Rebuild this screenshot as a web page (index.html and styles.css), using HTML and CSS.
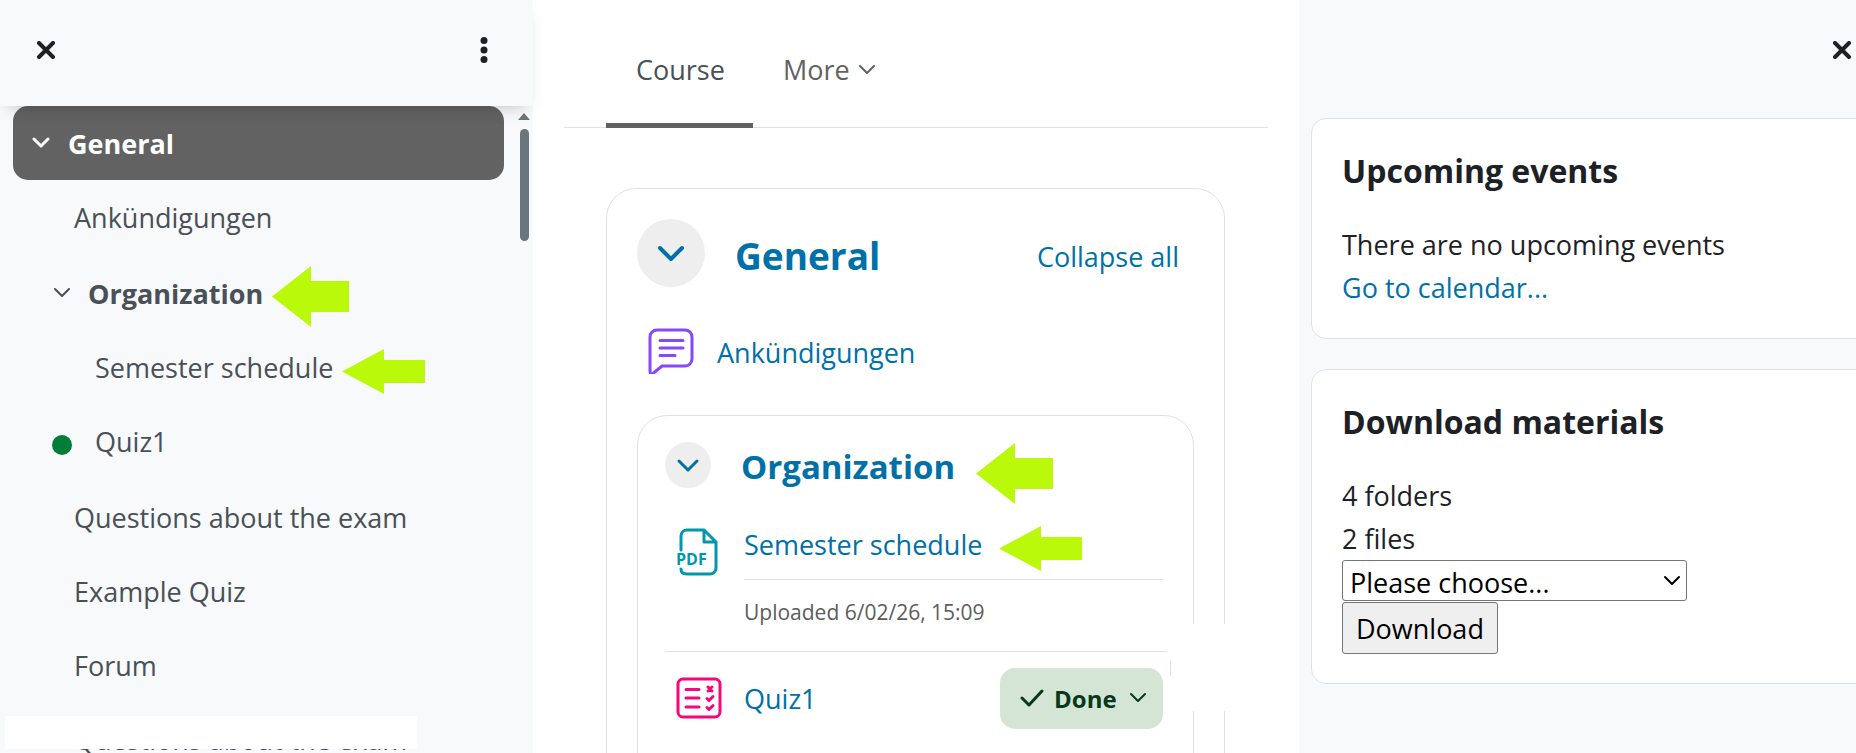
FILE: index.html
```html
<!DOCTYPE html>
<html lang="en">
<head>
  <meta charset="UTF-8" />
  <meta name="viewport" content="width=device-width, initial-scale=1.0"/>
  <title>Course</title>
  <link rel="stylesheet" href="styles.css">
</head>
<body>

  <div class="page">
    <!-- Course index -->
    <aside class="index">
      <div class="index-header">
        <button type="button" class="icon-btn" aria-label="Close course index">
          <svg width="18" height="18" viewBox="0 0 18 18"><path d="M2 2l14 14M16 2L2 16"/></svg>
        </button>
        <button type="button" class="icon-btn dots" aria-label="Options">
          <svg width="8" height="26" viewBox="0 0 8 26"><circle cx="4" cy="3.500" r="3.500"/><circle cx="4" cy="13" r="3.500"/><circle cx="4" cy="22.500" r="3.500"/></svg>
        </button>
      </div>
      <nav class="index-body">
        <ul class="index-list">
          <li><a href="#general" class="row section">
            <svg class="chevron" width="18" height="12" viewBox="0 0 18 12"><path d="M2 2l7 7 7-7"/></svg>General</a></li>
          <li><a href="#" class="row">Ankündigungen</a></li>
          <li class="subsection">
            <a href="#organization" class="row sub-title">
              <svg class="chevron" width="18" height="12" viewBox="0 0 18 12"><path d="M2 2l7 7 7-7"/></svg>Organization
              <svg class="arrow arrow-index-org" width="77" height="61" viewBox="0 0 77 61"><path d="M0 30.500L39 0v15h38v31H39v15z"/></svg>
            </a>
            <a href="#" class="row nested">Semester schedule
              <svg class="arrow arrow-index-file" width="83" height="45" viewBox="0 0 83 45"><path d="M0 22.500L42 0v11h41v23H42v11z"/></svg>
            </a>
            <a href="#" class="row nested"><span class="status"></span>Quiz1</a>
          </li>
          <li><a href="#" class="row">Questions about the exam</a></li>
          <li><a href="#" class="row">Example Quiz</a></li>
          <li><a href="#" class="row">Forum</a></li>
          <li class="masked"><a href="#" class="row">Questions about the exam</a></li>
        </ul>
        <div class="scrollbar">
          <svg width="12" height="7" viewBox="0 0 12 7"><path d="M6 0l6 7H0z"/></svg>
          <div class="thumb"></div>
          <svg class="down" width="12" height="7" viewBox="0 0 12 7"><path d="M6 7L0 0h12z"/></svg>
        </div>
      </nav>
    </aside>

    <!-- Course content -->
    <main class="content">
      <nav class="tabs">
        <a href="#" class="tab active">Course</a>
        <a href="#" class="tab">More
          <svg class="chevron" width="18" height="12" viewBox="0 0 18 12"><path d="M2 2l7 7 7-7"/></svg>
        </a>
      </nav>

      <section class="card" id="general">
        <div class="card-header">
          <button type="button" class="toggle" aria-label="Collapse General">
            <svg width="28" height="18" viewBox="0 0 28 18"><path d="M3 4l11 11L25 4"/></svg>
          </button>
          <h2>General</h2>
          <a href="#" class="collapse">Collapse all</a>
        </div>

        <div class="activity forum">
          <svg class="forum-icon" width="46" height="46" viewBox="0 0 46 46"><path d="M2 43V9a7 7 0 0 1 7-7h28a7 7 0 0 1 7 7v22a7 7 0 0 1-7 7H14l-9 7.500q-3 1-3-2.500zM12 12.500h23M12 20h23M12 27.500h15"/></svg>
          <a href="#">Ankündigungen</a>
        </div>

        <section class="card inner" id="organization">
          <div class="inner-header">
            <button type="button" class="toggle small" aria-label="Collapse Organization">
              <svg width="24" height="16" viewBox="0 0 24 16"><path d="M3 4l9 9 9-9"/></svg>
            </button>
            <h3>Organization</h3>
            <svg class="arrow arrow-org" width="77" height="61" viewBox="0 0 77 61"><path d="M0 30.500L39 0v15h38v31H39v15z"/></svg>
          </div>

          <div class="activity file">
            <svg class="pdf-icon" width="42" height="48" viewBox="0 0 42 48">
              <path d="M4 22V8a6 6 0 0 1 6-6h17l12 12v26a6 6 0 0 1-6 6H10q-6 0-6-5M27 2v12h12"/>
              <text x="-1" y="37">PDF</text>
            </svg>
            <div class="file-body">
              <a href="#">Semester schedule</a>
              <p>Uploaded 6/02/26, 15:09</p>
            </div>
            <svg class="arrow arrow-file" width="83" height="45" viewBox="0 0 83 45"><path d="M0 22.500L42 0v11h41v23H42v11z"/></svg>
          </div>

          <div class="activity quiz">
            <svg class="quiz-icon" width="46" height="42" viewBox="0 0 46 42"><rect x="2" y="2" width="42" height="38" rx="5"/><path class="marks" d="M10 12.500h13M10 21h13M10 30h13M32 10l4 4M36 10l-4 4M31 21.500l2 2 4-4M31 30.500l2 2 4-4"/></svg>
            <a href="#">Quiz1</a>
            <button type="button" class="done">
              <svg class="check" width="24" height="18" viewBox="0 0 24 18"><path d="M2 9l7 7L22 2"/></svg>
              Done
              <svg class="chevron" width="18" height="12" viewBox="0 0 18 12"><path d="M2 2l7 7 7-7"/></svg>
            </button>
          </div>
          <div class="cover"></div>
        </section>
      </section>
    </main>

    <!-- Block drawer -->
    <aside class="blocks">
      <div class="blocks-header">
        <button type="button" class="icon-btn" aria-label="Close block drawer">
          <svg width="18" height="18" viewBox="0 0 18 18"><path d="M2 2l14 14M16 2L2 16"/></svg>
        </button>
      </div>
      <section class="block">
        <h4>Upcoming events</h4>
        <p>There are no upcoming events</p>
        <a href="#">Go to calendar...</a>
      </section>
      <section class="block">
        <h4>Download materials</h4>
        <p>4 folders</p>
        <p>2 files</p>
        <form>
          <div class="select-wrap">
            <select id="material" aria-label="Materials">
              <option>Please choose...</option>
            </select>
            <svg class="chevron" width="18" height="12" viewBox="0 0 18 12"><path d="M2 2l7 7 7-7"/></svg>
          </div>
          <button type="button" class="download">Download</button>
        </form>
      </section>
    </aside>
  </div>

</body>
</html>
```
FILE: styles.css
```css
* {
  box-sizing: border-box;
}

body {
  margin: 0;
  font-family: "Open Sans", "Noto Sans", sans-serif;
  font-size: 27px;
  line-height: 43px;
  color: #1d2125;
  background: #fff;
}

h2, h3, h4, p, ul {
  margin: 0;
  padding: 0;
}

ul {
  list-style: none;
}

a {
  color: #0070a8;
  text-decoration: none;
}

button, select {
  font: inherit;
  color: inherit;
}

svg {
  flex: none;
  display: block;
  fill: none;
  stroke: currentColor;
  stroke-width: 3;
  stroke-linecap: round;
  stroke-linejoin: round;
}

.chevron {
  stroke-width: 2;
}

.page {
  display: grid;
  grid-template-columns: 533px 1fr 557px;
  height: 100vh;
  overflow: hidden;
}

.icon-btn {
  display: flex;
  padding: 0;
  border: 0;
  background: none;
  cursor: pointer;
}

.icon-btn svg {
  stroke-width: 4;
}

.dots svg {
  fill: currentColor;
  stroke: none;
}

/* lime pointers laid over the page */
.arrow {
  position: absolute;
  fill: #bbf90a;
  stroke: none;
}

.arrow-index-org {
  left: 259px;
  top: 10px;
}

.arrow-index-file {
  left: 329px;
  top: 19px;
}

.arrow-org {
  left: 311px;
  top: 1px;
}

.arrow-file {
  left: 334px;
  top: 6px;
}

/* course index */
.index {
  display: flex;
  flex-direction: column;
  min-height: 0;
  background: #f8f9fb;
}

.index-header {
  display: flex;
  align-items: center;
  justify-content: space-between;
  height: 106px;
  padding: 0 45px 7px 37px;
  background: #f8f9fb;
  position: relative;
  z-index: 1;
  box-shadow: 0 8px 16px -8px rgba(0, 0, 0, 0.25);
}

.index-body {
  display: flex;
  justify-content: space-between;
  flex: 1;
  min-height: 0;
  overflow: hidden;
  padding: 0 3px 0 13px;
}

.index-list {
  width: 491px;
}

.row {
  display: flex;
  align-items: center;
  position: relative;
  height: 74px;
  padding-left: 61px;
  color: #495057;
}

.section {
  gap: 18px;
  padding-left: 19px;
  border-radius: 15px;
  background: #626262;
  color: #fff;
  font-weight: 700;
}

.section .chevron {
  stroke-width: 3;
}

.subsection {
  padding: 2px 0;
}

.sub-title {
  gap: 17px;
  padding-left: 40px;
  font-weight: 700;
}

.nested {
  padding-left: 82px;
}

.status {
  position: absolute;
  left: 39px;
  top: 31px;
  width: 20px;
  height: 20px;
  border-radius: 50%;
  background: #007d38;
}

.masked {
  position: relative;
}

.masked::after {
  content: "";
  position: absolute;
  left: -8px;
  top: 14px;
  width: 412px;
  height: 33px;
  background: #fff;
}

.scrollbar {
  display: flex;
  flex-direction: column;
  align-items: center;
  padding-top: 7px;
  color: #6a757d;
}

.scrollbar svg {
  fill: currentColor;
  stroke: none;
}

.thumb {
  width: 9px;
  height: 112px;
  margin-top: 9px;
  border-radius: 5px;
  background: #6a757d;
}

.scrollbar .down {
  margin-top: auto;
  margin-bottom: -3px;
}

/* course content */
.content {
  min-width: 0;
  padding: 0 31px;
}

.tabs {
  display: flex;
  height: 128px;
  padding-left: 42px;
  border-bottom: 1px solid #dee2e6;
}

.tab {
  display: flex;
  align-items: center;
  gap: 8px;
  height: 128px;
  padding: 16px 28px 0 30px;
  border-bottom: 5px solid transparent;
  color: #626262;
}

.tab.active {
  border-bottom-color: #626262;
  color: #495057;
}

.card {
  border: 1px solid #dee2e6;
  border-radius: 30px;
}

#general {
  height: 700px;
  margin: 60px 43px 0 42px;
  padding: 30px;
}

.card-header {
  display: flex;
  align-items: center;
  gap: 30px;
  height: 68px;
}

.toggle {
  display: flex;
  align-items: center;
  justify-content: center;
  width: 68px;
  height: 68px;
  padding: 0;
  border: 0;
  border-radius: 50%;
  background: #eee;
  color: #0070a8;
}

.toggle svg {
  stroke-width: 4;
}

.toggle.small {
  width: 46px;
  height: 46px;
}

.toggle.small svg {
  stroke-width: 3;
}

h2, h3 {
  color: #0070a8;
}

h2 {
  font-size: 37px;
  line-height: 48px;
  padding-top: 5px;
}

.collapse {
  margin-left: auto;
  margin-right: 15px;
  padding-top: 6px;
}

.activity {
  display: flex;
  position: relative;
}

.forum {
  align-items: center;
  gap: 23px;
  margin: 41px 0;
  padding-left: 11px;
}

.forum a {
  padding-top: 2px;
}

.forum-icon {
  color: #8548ff;
}

.inner {
  position: relative;
  height: 500px;
  padding: 26px 26px 0 27px;
}

.inner-header {
  display: flex;
  align-items: center;
  gap: 30px;
  position: relative;
  height: 46px;
}

h3 {
  font-size: 33px;
  line-height: 42px;
  padding-top: 4px;
}

.file {
  gap: 25px;
  height: 131px;
  margin-top: 32px;
  padding: 0 4px 0 12px;
}

.pdf-icon {
  margin-top: 8px;
  overflow: visible;
  color: #0097ad;
}

.pdf-icon text {
  fill: currentColor;
  stroke: none;
  font-size: 16px;
  font-weight: 700;
}

.file-body {
  flex: 1;
}

.file-body a {
  display: block;
  height: 60px;
  padding-top: 3px;
  border-bottom: 1px solid #dee2e6;
}

.file-body p {
  padding-top: 11px;
  font-size: 21px;
  color: #5c5c5c;
}

.quiz {
  align-items: center;
  height: 93px;
  padding: 0 4px 0 11px;
  gap: 22px;
  border-top: 1px solid #dee2e6;
}

.quiz-icon {
  color: #f7047e;
}

.done {
  display: flex;
  align-items: center;
  gap: 10px;
  width: 163px;
  height: 61px;
  margin-left: auto;
  padding: 0 16px 0 20px;
  border: 0;
  border-radius: 15px;
  background: #d4e5d6;
  color: #07381a;
  font-size: 24px;
  font-weight: 700;
}

.done .chevron {
  margin-left: auto;
}

.cover {
  position: absolute;
  right: -46px;
  top: 208px;
  width: 68px;
  height: 87px;
  background: #fff;
}

/* sliver of border left beside the button */
.cover::before {
  content: "";
  position: absolute;
  left: -1px;
  top: 37px;
  width: 1px;
  height: 15px;
  background: #dee2e6;
}

/* block drawer */
.blocks {
  min-width: 0;
  overflow: hidden;
  padding-left: 12px;
  background: #f8f9fb;
}

.blocks-header {
  display: flex;
  align-items: center;
  justify-content: flex-end;
  height: 118px;
  padding: 0 5px 19px 0;
}

.block {
  margin: 0 -20px 30px 0;
  padding: 28px 30px 29px;
  border: 1px solid #dee2e6;
  border-radius: 15px;
  background: #fff;
}

h4 {
  margin-bottom: 28px;
  font-size: 32px;
  line-height: 48px;
}

.select-wrap {
  position: relative;
  width: 345px;
  height: 42px;
}

select {
  appearance: none;
  width: 100%;
  height: 41px;
  padding: 0 7px;
  border: 1px solid #767676;
  border-radius: 3px;
  background: #fff;
  color: #000;
}

.select-wrap .chevron {
  position: absolute;
  right: 6px;
  top: 15px;
  color: #000;
}

.download {
  display: block;
  height: 52px;
  padding: 0 13px;
  border: 1px solid #767676;
  border-radius: 3px;
  background: #efefef;
  color: #000;
}
```
